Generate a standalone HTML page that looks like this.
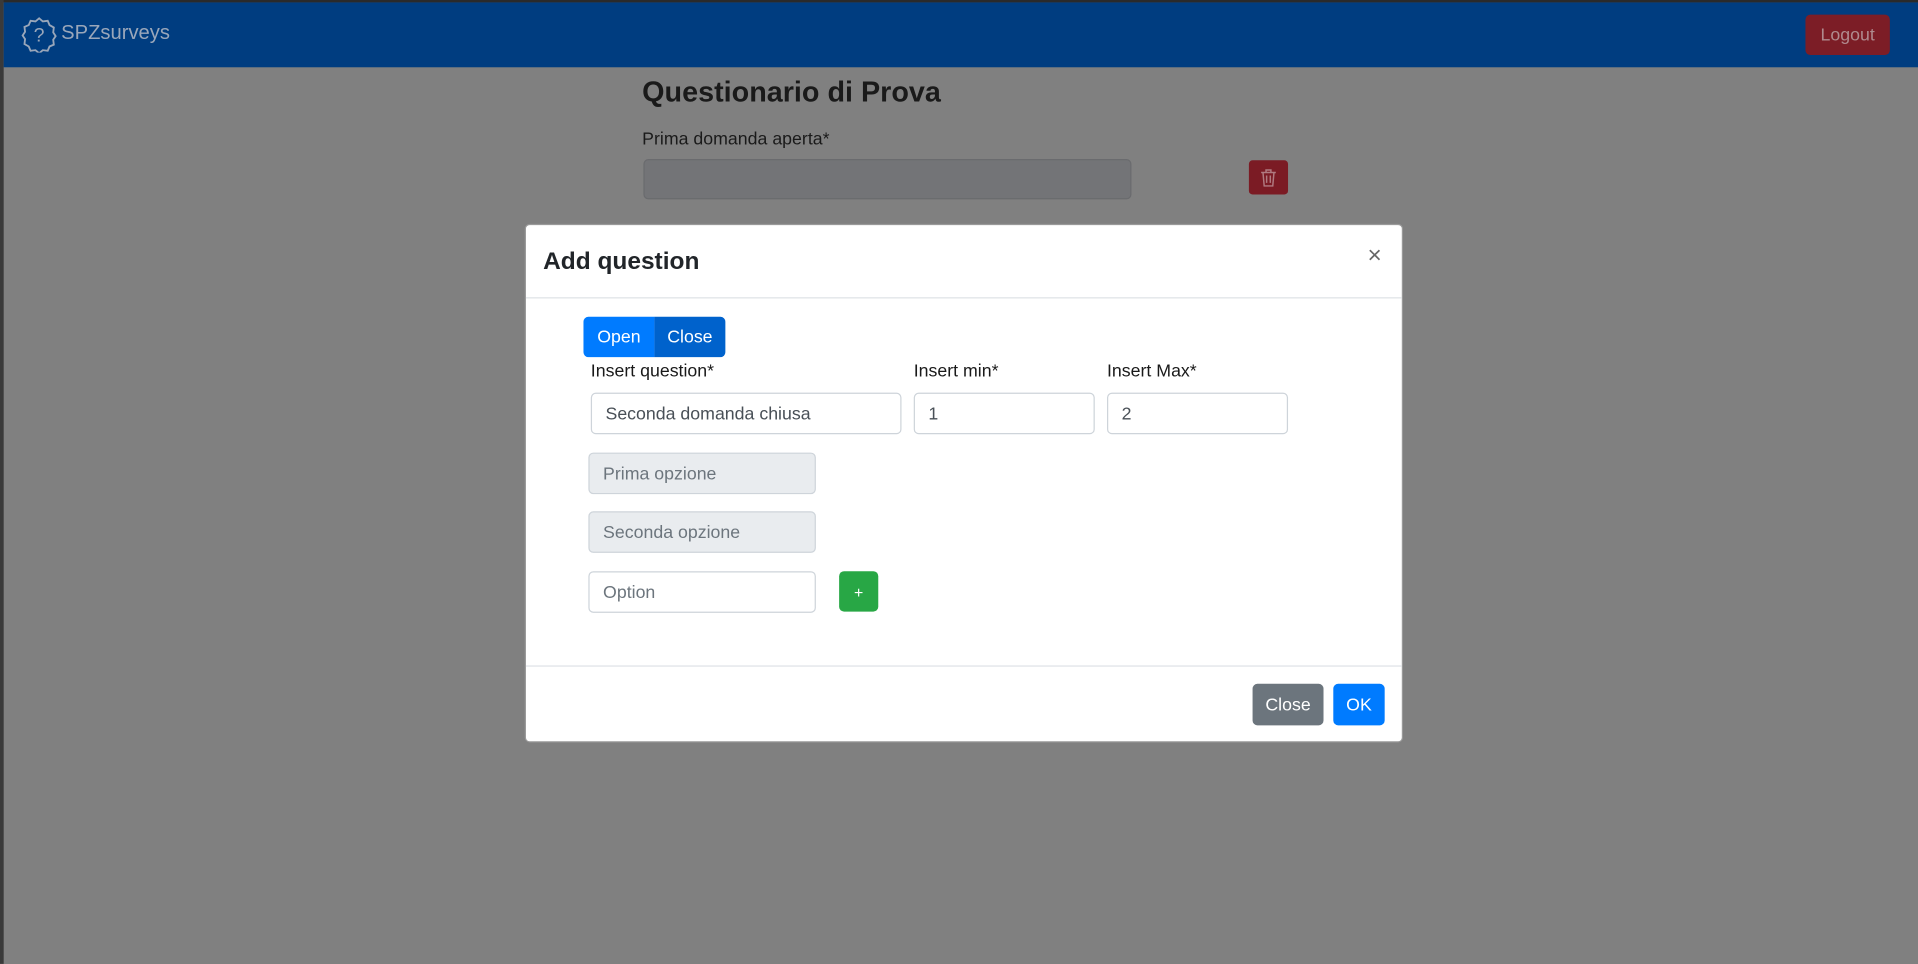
<!DOCTYPE html>
<html><head><meta charset="utf-8"><style>
html,body{margin:0;padding:0;width:1918px;height:964px;overflow:hidden;background:#808080;font-family:"Liberation Sans",sans-serif;}
#w{position:absolute;left:0;top:0;width:1568px;height:788px;transform:scale(1.22321);transform-origin:0 0;font-size:15px;color:#1a1a1a}
.a{position:absolute;box-sizing:border-box}
.inp{position:absolute;box-sizing:border-box;border:1px solid #ced4da;border-radius:4px;background:#fff;padding-left:11px;line-height:34px;font-size:14.5px;color:#495057}
.btn{position:absolute;box-sizing:border-box;color:#fff;text-align:center;font-size:14.5px;border-radius:4px}
</style></head><body><div id="w">
<div class="a" style="left:0;top:0;width:1568px;height:2px;background:#2a2a2a"></div>
<div class="a" style="left:0;top:0;width:3px;height:788px;background:#3a3a3a"></div>
<div class="a" style="left:3px;top:2px;width:1565px;height:53px;background:#003d80"></div>
<svg class="a" style="left:17px;top:13px" width="30" height="30" viewBox="0 0 30 30"><path d="M15 2l3 2.5 4-.5 1.5 3.5 3.5 2-.5 4 2 3-2 3 .5 4-3.5 1.5-1.5 3.5-4-.5-3 2.5-3-2.5-4 .5-1.5-3.5-3.5-2 .5-4-2-3 2-3-.5-4 3.5-1.5 1.5-3.5 4 .5z" fill="none" stroke="#9aa7ba" stroke-width="1.5"/><text x="15" y="21" font-size="16" text-anchor="middle" fill="#9aa7ba" font-family="Liberation Sans">?</text></svg>
<div class="a" style="left:50px;top:18px;font-size:16.5px;color:#9aa7ba">SPZsurveys</div>
<div class="btn" style="left:1476px;top:12px;width:69px;height:33px;line-height:34px;background:#7c1d26;color:#b08a8e">Logout</div>
<div class="a" style="left:525px;top:62px;font-size:23.5px;font-weight:bold">Questionario di Prova</div>
<div class="a" style="left:525px;top:106px;font-size:14.5px">Prima domanda aperta*</div>
<div class="a" style="left:526px;top:130px;width:399px;height:33px;background:#737477;border:1px solid #6a6b6e;border-radius:4px"></div>
<div class="a" style="left:1021px;top:131px;width:32px;height:28px;background:#7b1b24;border-radius:3px"></div>
<svg class="a" style="left:1030px;top:138px" width="14" height="15" viewBox="0 0 14 15"><path d="M1 3h12M5 3V1h4v2M2.5 3l1 11h7l1-11M5.5 5.5v6M8.5 5.5v6" fill="none" stroke="#b07a80" stroke-width="1.2"/></svg>
<div class="a" style="left:429px;top:183px;width:718px;height:424px;background:#fff;border-radius:4px;border:1px solid #999"></div>
<div class="a" style="left:444px;top:203px;font-size:20px;font-weight:bold;color:#212529">Add question</div>
<div class="a" style="left:1118px;top:198px;font-size:20px;color:#666">×</div>
<div class="a" style="left:430px;top:243px;width:716px;height:1px;background:#dee2e6"></div>
<div class="btn" style="left:477px;top:259px;width:58px;height:33px;line-height:35px;background:#007bff;border-radius:4px 0 0 4px">Open</div>
<div class="btn" style="left:535px;top:259px;width:58px;height:33px;line-height:35px;background:#0062cc;border-radius:0 4px 4px 0">Close</div>
<div class="a" style="left:483px;top:296px;font-size:14.5px">Insert question*</div>
<div class="a" style="left:747px;top:296px;font-size:14.5px">Insert min*</div>
<div class="a" style="left:905px;top:296px;font-size:14.5px">Insert Max*</div>
<div class="inp" style="left:483px;top:321px;width:254px;height:34px">Seconda domanda chiusa</div>
<div class="inp" style="left:747px;top:321px;width:148px;height:34px">1</div>
<div class="inp" style="left:905px;top:321px;width:148px;height:34px">2</div>
<div class="inp" style="left:481px;top:370px;width:186px;height:34px;background:#e9ecef;color:#6c757d">Prima opzione</div>
<div class="inp" style="left:481px;top:418px;width:186px;height:34px;background:#e9ecef;color:#6c757d">Seconda opzione</div>
<div class="inp" style="left:481px;top:467px;width:186px;height:34px;color:#6c757d">Option</div>
<div class="btn" style="left:686px;top:467px;width:32px;height:33px;line-height:35px;background:#28a745;font-size:13px">+</div>
<div class="a" style="left:430px;top:544px;width:716px;height:1px;background:#dee2e6"></div>
<div class="btn" style="left:1024px;top:559px;width:58px;height:34px;line-height:36px;background:#6c757d">Close</div>
<div class="btn" style="left:1090px;top:559px;width:42px;height:34px;line-height:36px;background:#007bff">OK</div>
</div></body></html>
